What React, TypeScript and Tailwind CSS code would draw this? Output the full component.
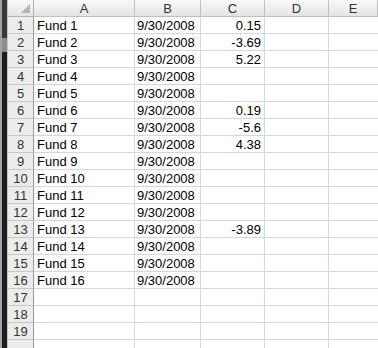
const cols = [
  { key: 'A', w: 'w-[101px]' },
  { key: 'B', w: 'w-[66px]' },
  { key: 'C', w: 'w-[64px]' },
  { key: 'D', w: 'w-[64px]' },
  { key: 'E', w: 'flex-1' },
];

const values: Record<number, string> = {
  1: '0.15',
  2: '-3.69',
  3: '5.22',
  6: '0.19',
  7: '-5.6',
  8: '4.38',
  13: '-3.89',
};

const rows = Array.from({ length: 20 }, (_, i) => i + 1);

function RowLine({ n }: { n: number }) {
  const hasFund = n <= 16;
  return (
    <div className="flex h-[17px] shrink-0">
      <div className="w-[26px] h-full box-border border-r border-b border-r-[#9a9a9a] border-b-[#c8c8c8] bg-[#ececec] text-[#333] flex items-center justify-center">
        {n <= 19 ? n : ''}
      </div>
      <div className="w-[101px] h-full box-border border-r border-b border-[#d0d7e5] flex items-center pl-[3px] text-black">
        {hasFund ? `Fund ${n}` : ''}
      </div>
      <div className="w-[66px] h-full box-border border-r border-b border-[#d0d7e5] flex items-center pl-[2px] text-black">
        {hasFund ? '9/30/2008' : ''}
      </div>
      <div className="w-[64px] h-full box-border border-r border-b border-[#d0d7e5] flex items-center justify-end pr-[3px] text-black">
        {values[n] ?? ''}
      </div>
      <div className="w-[64px] h-full box-border border-r border-b border-[#d0d7e5]" />
      <div className="flex-1 h-full box-border border-b border-[#d0d7e5]" />
    </div>
  );
}

export default function App() {
  return (
    <div
      className="w-[378px] h-[348px] overflow-hidden flex bg-white text-[13px] leading-none"
      style={{ fontFamily: '"Liberation Sans", Arial, sans-serif' }}
    >
      {/* window edge on the left */}
      <div className="w-[2px] h-full bg-[#a3a3a3]" />
      <div className="w-[5px] h-full flex flex-col">
        <div className="h-[38px] bg-[#3a3a3a]" />
        <div className="h-[14px] bg-[#8c8c8c]" />
        <div className="flex-1 bg-[#1e1e1e]" />
      </div>
      <div className="w-[1px] h-full bg-[#c4c4c4]" />

      <div className="flex-1 flex flex-col">
        <div className="h-[2px] bg-[#a9a9a9]" />
        {/* column headers */}
        <div className="flex h-[17px] shrink-0 bg-gradient-to-b from-[#f9f9f9] to-[#e3e3e3] text-[#333]">
          <div className="w-[26px] h-full box-border border-r border-b border-[#b2b2b2] relative">
            <svg className="absolute right-[3px] bottom-[3px]" width="9" height="9" viewBox="0 0 9 9">
              <polygon points="9,0 9,9 0,9" fill="#b4b4b4" />
            </svg>
          </div>
          {cols.map((c) => (
            <div
              key={c.key}
              className={`${c.w} h-full box-border border-r border-b border-[#c0c0c0] flex items-center justify-center`}
            >
              {c.key}
            </div>
          ))}
        </div>
        {rows.map((n) => (
          <RowLine key={n} n={n} />
        ))}
      </div>
    </div>
  );
}
